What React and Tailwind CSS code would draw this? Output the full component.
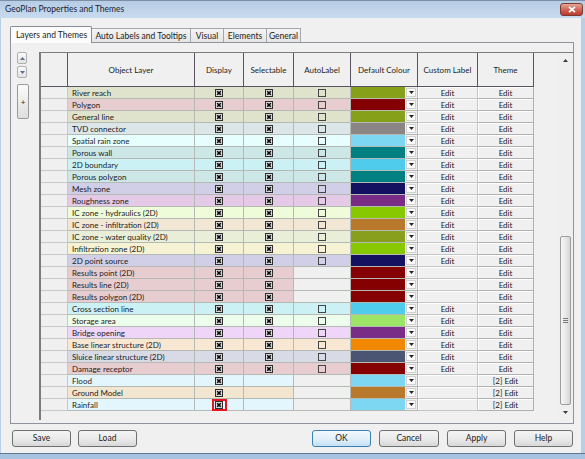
import React from 'react';

const rows = [
  { name: 'River reach', tint: 'bg-[#dfe3cc]', sw: 'bg-[#87a019]' },
  { name: 'Polygon', tint: 'bg-[#e8cdd0]', sw: 'bg-[#850000]' },
  { name: 'General line', tint: 'bg-[#dfe3cc]', sw: 'bg-[#87a019]' },
  { name: 'TVD connector', tint: 'bg-[#dce5e7]', sw: 'bg-[#8c8585]' },
  { name: 'Spatial rain zone', tint: 'bg-[#e6fefe]', sw: 'bg-[#7dd6f2]' },
  { name: 'Porous wall', tint: 'bg-[#cde6e6]', sw: 'bg-[#008080]' },
  { name: '2D boundary', tint: 'bg-[#cbf1f5]', sw: 'bg-[#4fcbec]' },
  { name: 'Porous polygon', tint: 'bg-[#cde6e6]', sw: 'bg-[#008080]' },
  { name: 'Mesh zone', tint: 'bg-[#d0cfe7]', sw: 'bg-[#141260]' },
  { name: 'Roughness zone', tint: 'bg-[#e4cae6]', sw: 'bg-[#792d86]' },
  { name: 'IC zone - hydraulics (2D)', tint: 'bg-[#eefcd9]', sw: 'bg-[#88c800]' },
  { name: 'IC zone - infiltration (2D)', tint: 'bg-[#f1e7d4]', sw: 'bg-[#b8792c]' },
  { name: 'IC zone - water quality (2D)', tint: 'bg-[#e8eed8]', sw: 'bg-[#889f1e]' },
  { name: 'Infiltration zone (2D)', tint: 'bg-[#f6f2d4]', sw: 'bg-[#88c800]' },
  { name: '2D point source', tint: 'bg-[#d0cfe7]', sw: 'bg-[#141260]' },
  { name: 'Results point (2D)', tint: 'bg-[#e8cdd0]', sw: 'bg-[#850000]', auto: false, custom: false },
  { name: 'Results line (2D)', tint: 'bg-[#e8cdd0]', sw: 'bg-[#850000]', auto: false, custom: false },
  { name: 'Results polygon (2D)', tint: 'bg-[#e8cdd0]', sw: 'bg-[#850000]', auto: false, custom: false },
  { name: 'Cross section line', tint: 'bg-[#cbf1f5]', sw: 'bg-[#4fcbec]' },
  { name: 'Storage area', tint: 'bg-[#ecfdec]', sw: 'bg-[#9be466]' },
  { name: 'Bridge opening', tint: 'bg-[#efd6f8]', sw: 'bg-[#792d86]' },
  { name: 'Base linear structure (2D)', tint: 'bg-[#f8e7d3]', sw: 'bg-[#f08800]' },
  { name: 'Sluice linear structure (2D)', tint: 'bg-[#d8dbe6]', sw: 'bg-[#4a5573]' },
  { name: 'Damage receptor', tint: 'bg-[#e8cdd0]', sw: 'bg-[#850000]' },
  { name: 'Flood', tint: 'bg-[#e4f6fd]', sw: 'bg-[#7dd6f2]', sel: false, auto: false, custom: false, theme: '[2] Edit' },
  { name: 'Ground Model', tint: 'bg-[#f2e6d1]', sw: 'bg-[#b8792c]', sel: false, auto: false, custom: false, theme: '[2] Edit' },
  { name: 'Rainfall', tint: 'bg-[#e4f6fd]', sw: 'bg-[#7dd6f2]', sel: false, auto: false, custom: false, theme: '[2] Edit', hl: true },
];

const Checked = () => (
  <svg width="8" height="8" viewBox="0 0 8 8" className="block">
    <rect x="0.5" y="0.5" width="7" height="7" fill="#d8d8d8" stroke="#2e2e2e" />
    <path d="M2.2 2.2L5.8 5.8M5.8 2.2L2.2 5.8" stroke="#000" strokeWidth="1.5" />
  </svg>
);

const Unchecked = () => (
  <svg width="8" height="8" viewBox="0 0 8 8" className="block">
    <rect x="0.5" y="0.5" width="7" height="7" fill="none" stroke="#454545" />
  </svg>
);

const TriDown = ({ color = '#222' }) => (
  <svg width="5" height="3" viewBox="0 0 5 3" className="block">
    <path d="M0 0H5L2.5 3Z" fill={color} />
  </svg>
);
const TriUp = ({ color = '#222' }) => (
  <svg width="5" height="3" viewBox="0 0 5 3" className="block">
    <path d="M0 3H5L2.5 0Z" fill={color} />
  </svg>
);

const cellB = 'border-r border-b border-[#b4b9b4]';

function Row({ r }) {
  const sel = r.sel !== false;
  const auto = r.auto !== false;
  const custom = r.custom !== false;
  return (
    <div className="flex h-[12px] shrink-0">
      <div className="w-[27px] shrink-0 bg-[#f0f0f0] border-r border-b border-[#c8c8c8]" />
      <div className={`w-[127px] shrink-0 ${cellB} ${r.tint} pl-[4px] flex items-center leading-none whitespace-nowrap overflow-hidden`}>
        {r.name}
      </div>
      <div className={`w-[49px] shrink-0 ${cellB} ${r.tint} flex items-center justify-center`}>
        {r.hl ? (
          <span className="w-[15px] h-[12px] border-2 border-[#e8141e] flex items-center justify-center">
            <Checked />
          </span>
        ) : (
          <Checked />
        )}
      </div>
      <div className={`w-[50px] shrink-0 ${cellB} ${r.tint} flex items-center justify-center`}>
        {sel ? <Checked /> : null}
      </div>
      <div className={`w-[57px] shrink-0 ${cellB} ${auto ? r.tint : 'bg-[#f0f0f0]'} flex items-center justify-center`}>
        {auto ? <Unchecked /> : null}
      </div>
      <div className={`w-[54px] shrink-0 border-b border-[#b4b9b4] ${r.sw}`} />
      <div className="w-[13px] shrink-0 border-r border-b border-[#b4b9b4] bg-[#f0f0f0] p-[1px] flex">
        <div className="flex-1 bg-[#fafafa] border border-[#d2d2d2] flex items-center justify-center">
          <TriDown />
        </div>
      </div>
      <div className="w-[60px] shrink-0 border-r border-b border-[#c6c6c6] bg-[#f0f0f0] shadow-[inset_1px_1px_0_#ffffff] flex items-center justify-center leading-none">
        {custom ? 'Edit' : ''}
      </div>
      <div className="w-[56px] shrink-0 border-r border-b border-[#b0b0b0] bg-[#f0f0f0] shadow-[inset_1px_1px_0_#ffffff] flex items-center justify-center leading-none">
        {r.theme || 'Edit'}
      </div>
    </div>
  );
}

const hdr = 'shrink-0 border-r border-b border-[#5a5260] flex items-center justify-center text-center';

function Btn({ children, w, primary }) {
  return (
    <div
      className={`h-[17px] ${w} rounded-[3px] border flex items-center justify-center leading-none text-[8.5px] ${
        primary
          ? 'border-[#3c7fb1] bg-gradient-to-b from-[#f2f8fd] via-[#e3f0fa] to-[#c4e0f5]'
          : 'border-[#707070] bg-gradient-to-b from-[#f4f4f4] via-[#ebebeb] to-[#d8d8d8]'
      }`}
    >
      {children}
    </div>
  );
}

export default function App() {
  return (
    <div className="w-[585px] h-[459px] bg-[#b9cfe6] flex flex-col overflow-hidden font-[family-name:Lato,sans-serif] text-[8px] text-[#1c1c1c]">
      {/* Title bar */}
      <div className="h-[18px] shrink-0 flex items-center justify-between pl-[5px] pr-[2px] bg-gradient-to-b from-[#b6cde6] to-[#c8daee] border-t border-[#7d8fa6]">
        <span className="text-[8.5px] text-[#1a2433] leading-none">GeoPlan Properties and Themes</span>
        <div className="w-[23px] h-[13px] -mt-[1px] rounded-[3px] border border-[#7b3b33] bg-gradient-to-b from-[#e6a597] via-[#d0675a] to-[#b9392b] flex items-center justify-center">
          <svg width="8" height="7" viewBox="0 0 8 7">
            <path d="M1 0.8L7 6.2M7 0.8L1 6.2" stroke="#ffffff" strokeWidth="1.8" />
          </svg>
        </div>
      </div>

      {/* Body */}
      <div className="ml-[1px] w-[580px] h-[435px] shrink-0 bg-[#f0f0f0] flex flex-col">
        {/* Tabs */}
        <div className="mt-[8px] ml-[9px] h-[17px] flex items-end text-[8.5px] leading-none">
          <div className="relative z-10 w-[82px] h-[17px] bg-[#fcfcfc] border-t border-l border-r border-[#898c95] rounded-t-[2px] flex items-center pl-[5px]">
            Layers and Themes
          </div>
          <div className="w-[99px] h-[15px] bg-gradient-to-b from-[#f3f3f3] to-[#e4e4e4] border-t border-r border-[#a3a6ad] flex items-center justify-center">
            Auto Labels and Tooltips
          </div>
          <div className="w-[33px] h-[15px] bg-gradient-to-b from-[#f3f3f3] to-[#e4e4e4] border-t border-r border-[#a3a6ad] flex items-center justify-center">
            Visual
          </div>
          <div className="w-[43px] h-[15px] bg-gradient-to-b from-[#f3f3f3] to-[#e4e4e4] border-t border-r border-[#a3a6ad] flex items-center justify-center">
            Elements
          </div>
          <div className="w-[34px] h-[15px] bg-gradient-to-b from-[#f3f3f3] to-[#e4e4e4] border-t border-r border-[#a3a6ad] flex items-center justify-center">
            General
          </div>
        </div>

        {/* Panel */}
        <div className="-mt-[1px] ml-[9px] w-[564px] h-[382px] border border-[#8f939b] bg-[#f0f0f0] flex pt-[9px] pl-[6px] pb-[2px]">
          {/* Left buttons */}
          <div className="w-[12px] shrink-0 flex flex-col">
            <div className="w-[10px] h-[12px] rounded-[2px] border border-[#b0b0b0] bg-gradient-to-b from-[#fbfbfb] to-[#e2e2e2] flex items-center justify-center">
              <TriUp color="#5b6f90" />
            </div>
            <div className="w-[10px] h-[12px] mt-[2px] rounded-[2px] border border-[#b0b0b0] bg-gradient-to-b from-[#fbfbfb] to-[#e2e2e2] flex items-center justify-center">
              <TriDown color="#5b6f90" />
            </div>
            <div className="w-[12px] h-[35px] mt-[6px] rounded-[2px] border border-[#9a9a9a] bg-gradient-to-b from-[#fbfbfb] to-[#dedede] flex items-center justify-center leading-none text-[8px]">
              +
            </div>
          </div>

          {/* Grid */}
          <div className="ml-[10px] flex-1 h-[368px] border-l-2 border-t border-[#7c7c7c] flex bg-[#f0f0f0]">
            <div className="w-[493px] shrink-0 flex flex-col">
              {/* Header */}
              <div className="flex h-[34px] shrink-0 bg-[#f0f0f0] leading-none">
                <div className={`w-[27px] ${hdr}`} />
                <div className={`w-[127px] ${hdr}`}>Object Layer</div>
                <div className={`w-[49px] ${hdr}`}>Display</div>
                <div className={`w-[50px] ${hdr}`}>Selectable</div>
                <div className={`w-[57px] ${hdr}`}>AutoLabel</div>
                <div className={`w-[67px] ${hdr}`}>Default Colour</div>
                <div className={`w-[60px] ${hdr}`}>Custom Label</div>
                <div className={`w-[56px] ${hdr}`}>Theme</div>
              </div>
              {rows.map((r) => (
                <Row key={r.name} r={r} />
              ))}
            </div>
            <div className="flex-1" />
            {/* Scrollbar */}
            <div className="w-[15px] shrink-0 flex flex-col bg-[#efefef]">
              <div className="h-[15px] flex items-center justify-center">
                <TriUp color="#3a3a3a" />
              </div>
              <div className="flex-1 flex flex-col justify-end items-center">
                <div className="w-[11px] h-[169px] rounded-[2px] border border-[#9c9c9c] bg-gradient-to-r from-[#f6f6f6] via-[#e9e9e9] to-[#d4d4d4] flex flex-col items-center justify-center gap-[1px]">
                  <div className="w-[5px] h-[1px] bg-[#7a7a7a]" />
                  <div className="w-[5px] h-[1px] bg-[#7a7a7a]" />
                  <div className="w-[5px] h-[1px] bg-[#7a7a7a]" />
                </div>
              </div>
              <div className="h-[15px] flex items-center justify-center">
                <TriDown color="#3a3a3a" />
              </div>
            </div>
          </div>
        </div>

        {/* Buttons */}
        <div className="mt-[6px] flex justify-between pl-[11px] pr-[8px]">
          <div className="flex gap-[7px]">
            <Btn w="w-[59px]">Save</Btn>
            <Btn w="w-[59px]">Load</Btn>
          </div>
          <div className="flex gap-[8px]">
            <Btn w="w-[59px]" primary>OK</Btn>
            <Btn w="w-[60px]">Cancel</Btn>
            <Btn w="w-[59px]">Apply</Btn>
            <Btn w="w-[59px]">Help</Btn>
          </div>
        </div>
      </div>
      <div className="flex-1 border-t border-[#5e7895] bg-[#a8c3df]" />
    </div>
  );
}
